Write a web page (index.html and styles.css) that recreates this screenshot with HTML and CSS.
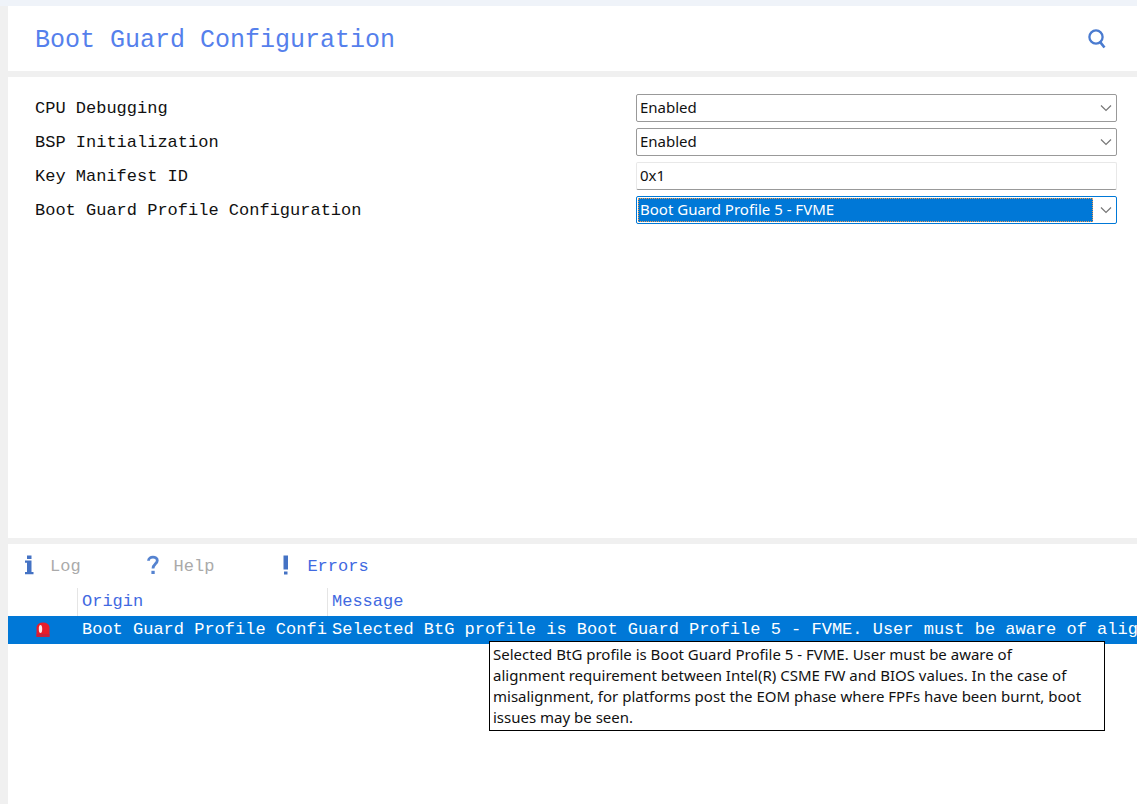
FILE: index.html
```html
<!DOCTYPE html>
<html lang="en">
<head>
<meta charset="utf-8">
<title>Boot Guard Configuration</title>
<link rel="stylesheet" href="styles.css">
</head>
<body>
<header class="panel header">
  <h1 class="title">Boot Guard Configuration</h1>
  <button class="search" type="button" aria-label="Search">
    <svg width="20" height="20" viewBox="0 0 20 20" fill="none" stroke="#4a7bd0" stroke-width="2.3"><circle cx="9" cy="8" r="6.6"/><path d="M12.8 12.6L17.5 18.5" stroke-width="2.6"/></svg>
  </button>
</header>

<main class="panel settings">
  <form class="form">
    <label for="cpu">CPU Debugging</label>
    <div class="combo">
      <select id="cpu" class="field"><option>Enabled</option><option>Disabled</option></select>
      <svg class="chevron" viewBox="0 0 12 8"><path d="M1 1.5L6 6.5L11 1.5"/></svg>
    </div>
    <label for="bsp">BSP Initialization</label>
    <div class="combo">
      <select id="bsp" class="field"><option>Enabled</option><option>Disabled</option></select>
      <svg class="chevron" viewBox="0 0 12 8"><path d="M1 1.5L6 6.5L11 1.5"/></svg>
    </div>
    <label for="key">Key Manifest ID</label>
    <input id="key" class="field text" type="text" value="0x1">
    <label for="profile">Boot Guard Profile Configuration</label>
    <div class="combo active">
      <select id="profile" class="field"><option>Boot Guard Profile 5 - FVME</option></select>
      <span class="focus"></span>
      <svg class="chevron" viewBox="0 0 12 8"><path d="M1 1.5L6 6.5L11 1.5"/></svg>
    </div>
  </form>
</main>

<section class="panel output">
  <nav class="tabs">
    <button class="tab" type="button">
      <svg width="16" height="20" viewBox="0 0 16 20" fill="#4472c4"><path d="M6 .5h4.500V4H6zM4 5.500h6.500V17h2v2.300H4V17h2V7.800H4z"/></svg>
      <span>Log</span>
    </button>
    <button class="tab" type="button">
      <svg width="16" height="20" viewBox="0 0 16 20"><path d="M3.500 5.800C3.500 .900 12.300 .900 12.300 5.500C12.300 8.600 8 9 8 13.500" fill="none" stroke="#5583d0" stroke-width="2.800"/><path d="M6.400 15.800h3.300V19H6.400z" fill="#5583d0"/></svg>
      <span>Help</span>
    </button>
    <button class="tab current" type="button">
      <svg width="16" height="20" viewBox="0 0 16 20" fill="#4472c4"><path d="M5.500 .5h4.500v14H5.500zM6 16.500h3.500v3H6z"/></svg>
      <span>Errors</span>
    </button>
  </nav>
  <table class="log">
    <colgroup><col class="c-icon"><col class="c-origin"><col></colgroup>
    <thead>
      <tr><th></th><th>Origin</th><th>Message</th></tr>
    </thead>
    <tbody>
      <tr>
        <td class="severity"><svg width="16" height="18" viewBox="0 0 16 18"><path d="M1.500 15V6Q2.500 1.500 8 1.500T14.500 6V15Q14.500 16 13.500 16H2.500Q1.500 16 1.500 15z" fill="#e81c2a"/><path d="M1.500 13h13v3h-13z" fill="#c8203c"/><ellipse cx="5.500" cy="8" rx="1.700" ry="4" fill="#fff" opacity=".9"/></svg></td>
        <td><div class="clip">Boot Guard Profile Confi</div></td>
        <td class="message">
          <div class="clip">Selected BtG profile is Boot Guard Profile 5 - FVME. User must be aware of alignment</div>
          <div class="tooltip" role="tooltip">Selected BtG profile is Boot Guard Profile 5 - FVME. User must be aware of<br>alignment requirement between Intel(R) CSME FW and BIOS values. In the case of<br>misalignment, for platforms post the EOM phase where FPFs have been burnt, boot<br>issues may be seen.</div>
        </td>
      </tr>
    </tbody>
  </table>
</section>
</body>
</html>
```

FILE: styles.css
```css
* {
  box-sizing: border-box;
}

body {
  margin: 0;
  min-height: 100vh;
  padding-left: 8px;
  border-top: 6px solid #eff3f9;
  background: #f0f0f0;
  display: grid;
  grid-template-rows: auto 23fr 13fr;
  grid-template-columns: minmax(0, 1fr);
  gap: 6px;
  font-family: "Liberation Mono", monospace;
  font-size: 17px;
  line-height: 20px;
  color: #111;
  overflow-x: hidden;
}

.panel {
  background: #fff;
}

button {
  font: inherit;
  border: 0;
  padding: 0;
  background: none;
}

svg {
  display: block;
}

.header {
  display: flex;
  align-items: center;
  justify-content: space-between;
  padding: 19px 30px 14px 27px;
}

.title {
  margin: 0;
  font-size: 25px;
  font-weight: 400;
  line-height: 32px;
  color: #5580ec;
}

.search {
  padding-bottom: 4px;
}

.form {
  display: grid;
  grid-template-columns: 601fr 481fr;
  grid-auto-rows: 28px;
  row-gap: 6px;
  align-items: center;
  padding: 17px 20px 16px 27px;
}

label {
  padding-top: 2px;
}

.combo {
  position: relative;
}

.field {
  appearance: none;
  display: block;
  width: 100%;
  height: 28px;
  margin: 0;
  padding: 0 24px 2px 3px;
  border: 1px solid #999;
  border-radius: 2px;
  background: #fff;
  color: #111;
  font-family: "Noto Sans", sans-serif;
  font-size: 15px;
  outline: 0;
}

.text {
  border-color: #e8e8e8;
  border-bottom-color: #999;
}

.chevron {
  position: absolute;
  right: 5px;
  top: 10px;
  width: 12px;
  height: 8px;
  fill: none;
  stroke: #777;
  stroke-width: 1.2;
  pointer-events: none;
}

.active .field {
  border-color: #0078d7;
  color: #fff;
  background: linear-gradient(#0078d7, #0078d7) 1px 1px / calc(100% - 24px) calc(100% - 2px) no-repeat #fff;
}

.active option {
  color: #111;
}

.focus {
  position: absolute;
  inset: 2px 24px 2px 2px;
  border: 1px dotted #f09a50;
  pointer-events: none;
}

.tabs {
  display: flex;
  gap: 64px;
  padding: 11px 13px;
}

.tab {
  display: flex;
  align-items: center;
  gap: 13px;
  color: #aaa;
}

.tab span {
  padding-top: 2px;
}

.tab svg {
  margin-bottom: 2px;
}

.current {
  color: #4169e1;
}

.log {
  width: 100%;
  table-layout: fixed;
  border-collapse: collapse;
}

.c-icon {
  width: 69px;
}

.c-origin {
  width: 250px;
}

th,
td {
  padding: 4px 0 4px 5px;
  text-align: left;
  font-weight: 400;
  white-space: nowrap;
}

th {
  height: 28px;
  color: #4169e1;
}

th + th {
  box-shadow: inset 1px 0 #e5e5e5;
}

tbody tr {
  background: #0078d7;
  color: #fff;
}

.severity {
  padding-left: 27px;
}

.clip {
  overflow: hidden;
}

.message {
  position: relative;
}

.tooltip {
  position: absolute;
  left: 162px;
  top: 25px;
  width: 616px;
  padding: 2px 2px 2px 3px;
  border: 1px solid #000;
  background: #fff;
  color: #111;
  font-family: "Noto Sans", sans-serif;
  font-size: 15px;
  line-height: 21px;
}
```
